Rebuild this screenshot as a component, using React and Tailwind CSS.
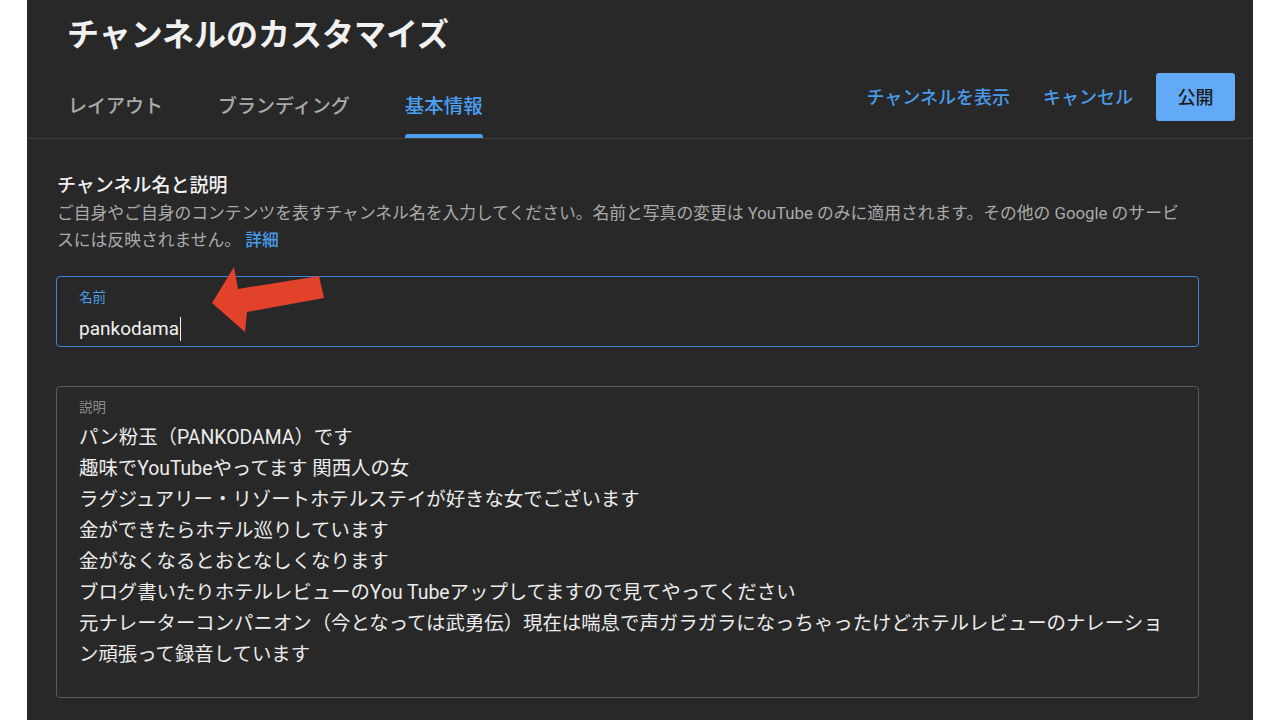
export default function App() {
  const lines = [
    "パン粉玉（PANKODAMA）です",
    "趣味でYouTubeやってます 関西人の女",
    "ラグジュアリー・リゾートホテルステイが好きな女でございます",
    "金ができたらホテル巡りしています",
    "金がなくなるとおとなしくなります",
    "ブログ書いたりホテルレビューのYou Tubeアップしてますので見てやってください",
    "元ナレーターコンパニオン（今となっては武勇伝）現在は喘息で声ガラガラになっちゃったけどホテルレビューのナレーショ",
    "ン頑張って録音しています",
  ];
  return (
    <div className="relative w-[1280px] h-[720px] overflow-hidden bg-white font-['Roboto','Noto_Sans_CJK_JP',sans-serif]">
      <div className="ml-[27px] w-[1226px] h-full bg-[#282828]">
        {/* Header */}
        <div className="pl-[40px]">
          <div className="pt-[11px] h-[57px] text-[32px] leading-[48px] font-bold text-[#f1f1f1] whitespace-nowrap">
            チャンネルのカスタマイズ
          </div>
        </div>
        <div className="flex justify-between border-b border-[#3d3d3d] pl-[41px] pr-[18px] h-[82px]">
          <div className="flex gap-[55px] h-[81px]">
            <div className="flex flex-col">
              <div className="mt-[36px] text-[19px] leading-[28px] font-medium text-[#aaaaaa] whitespace-nowrap">レイアウト</div>
            </div>
            <div className="flex flex-col">
              <div className="mt-[36px] text-[19px] leading-[28px] font-medium text-[#aaaaaa] whitespace-nowrap">ブランディング</div>
            </div>
            <div className="flex flex-col">
              <div className="mt-[36px] text-[19.5px] leading-[28px] font-medium text-[#4a9ff0] whitespace-nowrap">基本情報</div>
              <div className="flex-1"></div>
              <div className="h-[4px] bg-[#4a9ff0] rounded-t-[3px]"></div>
            </div>
          </div>
          <div className="flex items-center h-[48px] mt-[16px]">
            <span className="mr-[33px] text-[18px] font-medium text-[#4a9be8] whitespace-nowrap">チャンネルを表示</span>
            <span className="mr-[23px] text-[18px] font-medium text-[#4a9be8] whitespace-nowrap">キャンセル</span>
            <div className="w-[79px] h-[48px] rounded-[3px] bg-[#62a9f6] flex items-center justify-center text-[18px] font-medium text-[#1c1c1c]">
              公開
            </div>
          </div>
        </div>

        {/* Content */}
        <div className="pl-[29px] pr-[54px] pt-[33px]">
          <div className="pl-[1px] text-[19px] leading-[28px] font-medium text-[#f1f1f1] whitespace-nowrap">
            チャンネル名と説明
          </div>
          <div className="pl-[1px] text-[16.8px] leading-[27px] text-[#aaaaaa] whitespace-nowrap">
            <div>ご自身やご自身のコンテンツを表すチャンネル名を入力してください。名前と写真の変更は YouTube のみに適用されます。その他の Google のサービ</div>
            <div>
              スには反映されません。 <span className="text-[#4a9be8] font-medium">詳細</span>
            </div>
          </div>

          <div className="mt-[22px] h-[71px] border border-[#3f86d6] rounded-[4px] pl-[22px] pt-[10px]">
            <div className="text-[13.5px] leading-[20px] text-[#4a9be8]">名前</div>
            <div className="mt-[8px] flex items-center h-[28px]">
              <span className="text-[19px] leading-[28px] text-[#f1f1f1]">pankodama</span>
              <span className="ml-[1px] w-[1px] h-[24px] bg-[#f1f1f1]"></span>
            </div>
          </div>

          <div className="mt-[39px] h-[312px] border border-[#5a5a5a] rounded-[4px] pl-[22px] pt-[10px]">
            <div className="text-[13.5px] leading-[20px] text-[#8c8c8c]">説明</div>
            <div className="mt-[5px] text-[19.4px] leading-[31px] text-[#ececec] whitespace-nowrap">
              {lines.map((l, i) => (
                <div key={i}>{l}</div>
              ))}
            </div>
          </div>
        </div>
      </div>

      {/* Red annotation arrow */}
      <svg className="absolute left-0 top-0 pointer-events-none" width="1280" height="720" viewBox="0 0 1280 720">
        <polygon
          points="212,303 234,267 238,289 319,276 324,298 247,312 245,332"
          fill="#e2412a"
        />
      </svg>
    </div>
  );
}
